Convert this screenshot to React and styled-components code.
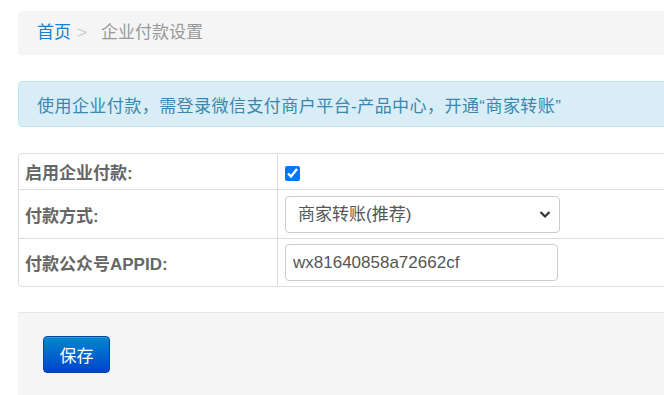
import React from "react";
import styled, {createGlobalStyle} from "styled-components";

const GlobalStyle = createGlobalStyle`
  html, body {
    margin: 0;
    padding: 0;
    overflow: hidden;
    background: #fff;
  }
  body {
    font-family: "Liberation Sans", "Noto Sans CJK SC", sans-serif;
    font-size: 17px;
    color: #333;
  }
`;

const Page = styled.div`
  width: 700px;
  padding: 11px 0 0 18px;
`;

const Breadcrumb = styled.ul`
  list-style: none;
  margin: 0;
  height: 44px;
  padding: 0 19px;
  display: flex;
  align-items: center;
  background: #f5f5f5;
  border-radius: 4px;
  line-height: 44px;
`;

const Crumb = styled.li`
  color: ${(p) => (p.$active ? "#999" : "#1a7fc6")};
`;

const Divider = styled.span`
  color: #ccc;
  padding: 0 14px 0 6px;
`;

const Alert = styled.div`
  margin-top: 26px;
  height: 44px;
  padding: 0 18px;
  display: flex;
  align-items: center;
  background: #d9edf7;
  border: 1px solid #bce8f1;
  border-radius: 4px;
  color: #3a87ad;
  letter-spacing: 0.45px;
`;

const Table = styled.table`
  margin-top: 26px;
  width: 100%;
  border-collapse: separate;
  border-spacing: 0;
  border: 1px solid #ddd;
  border-radius: 4px;
`;

const Row = styled.tr`
  height: ${(p) => p.$h}px;
`;

const Label = styled.td`
  width: 252px;
  padding: 0 0 0 6px;
  font-weight: bold;
  color: #666;
  vertical-align: middle;
  border-right: 1px solid #ddd;
  border-top: ${(p) => (p.$first ? "none" : "1px solid #ddd")};
`;

const Field = styled.td`
  padding: 0 0 0 7px;
  vertical-align: middle;
  border-top: ${(p) => (p.$first ? "none" : "1px solid #ddd")};
`;

const Check = styled.input`
  width: 15px;
  height: 15px;
  margin: 4px 0 0 0;
  accent-color: #0075ff;
  display: block;
`;

const SelectWrap = styled.div`
  position: relative;
  width: 275px;
`;

const Select = styled.select`
  appearance: none;
  width: 100%;
  height: 37px;
  padding: 0 0 0 12px;
  border: 1px solid #ccc;
  border-radius: 4px;
  background: #fff;
  font: inherit;
  color: #555;
  display: block;
`;

const Chevron = styled.svg`
  position: absolute;
  right: 9px;
  top: 14px;
  pointer-events: none;
`;

const Input = styled.input`
  box-sizing: border-box;
  width: 273px;
  height: 37px;
  padding: 0 7px;
  border: 1px solid #ccc;
  border-radius: 4px;
  font: inherit;
  color: #555;
  display: block;
`;

const Footer = styled.div`
  margin-top: 25px;
  height: 100px;
  padding: 23px 25px;
  background: #f5f5f5;
  border-top: 1px solid #e5e5e5;
`;

const Button = styled.button`
  width: 67px;
  height: 37px;
  border: 1px solid #0044aa;
  border-radius: 4px;
  background: linear-gradient(#0088cc, #0044cc);
  color: #fff;
  font: inherit;
  box-shadow: inset 0 1px 0 rgba(255, 255, 255, 0.2);
`;

const App = () => {
  return (
    <Page>
      <GlobalStyle />
      <Breadcrumb>
        <Crumb>首页</Crumb>
        <Divider>&gt;</Divider>
        <Crumb $active>企业付款设置</Crumb>
      </Breadcrumb>
      <Alert>使用企业付款，需登录微信支付商户平台-产品中心，开通“商家转账”</Alert>
      <Table>
        <tbody>
          <Row $h={35}>
            <Label $first>启用企业付款:</Label>
            <Field $first>
              <Check type="checkbox" defaultChecked />
            </Field>
          </Row>
          <Row $h={49}>
            <Label>付款方式:</Label>
            <Field>
              <SelectWrap>
                <Select defaultValue="transfer">
                  <option value="transfer">商家转账(推荐)</option>
                  <option value="pay">企业付款到零钱</option>
                </Select>
                <Chevron width="12" height="9" viewBox="0 0 12 9">
                  <path d="M1.5 2 L6 6.5 L10.5 2" fill="none" stroke="#333" strokeWidth="2.2" />
                </Chevron>
              </SelectWrap>
            </Field>
          </Row>
          <Row $h={48}>
            <Label>付款公众号APPID:</Label>
            <Field>
              <Input type="text" defaultValue="wx81640858a72662cf" />
            </Field>
          </Row>
        </tbody>
      </Table>
      <Footer>
        <Button type="button">保存</Button>
      </Footer>
    </Page>
  );
};

export default App;
